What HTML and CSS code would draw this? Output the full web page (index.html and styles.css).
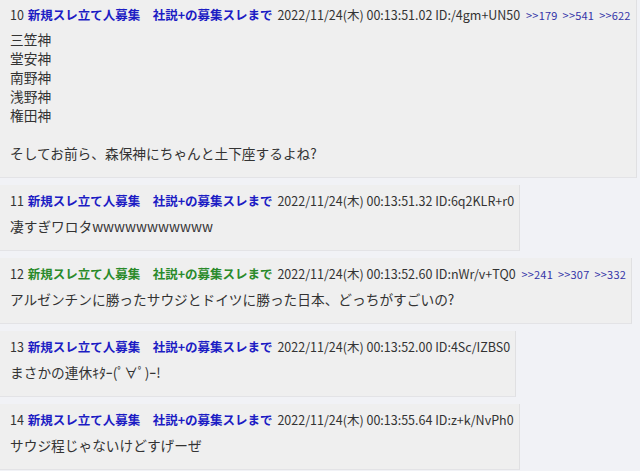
FILE: index.html
```html
<!DOCTYPE html>
<html lang="ja">
<head>
    <meta charset="UTF-8">
    <meta name="viewport" content="width=device-width, initial-scale=1.0">
    <title>スレッド</title>
    <link rel="stylesheet" href="styles.css">
</head>
<body>
    <div class="thread">
        <div class="post post-first">
            <div class="meta">
                <span class="num">10</span>
                <span class="name">新規スレ立て人募集　社説+の募集スレまで</span>
                <span class="date">2022/11/24(木) 00:13:51.02 ID:/4gm+UN50</span>
                <span class="refs"><a>&gt;&gt;179</a><a>&gt;&gt;541</a><a>&gt;&gt;622</a></span>
            </div>
            <div class="body">三笠神<br>堂安神<br>南野神<br>浅野神<br>権田神<br><br>そしてお前ら、森保神にちゃんと土下座するよね?</div>
        </div>
        <div class="post">
            <div class="meta">
                <span class="num">11</span>
                <span class="name">新規スレ立て人募集　社説+の募集スレまで</span>
                <span class="date">2022/11/24(木) 00:13:51.32 ID:6q2KLR+r0</span>
            </div>
            <div class="body">凄すぎワロタwwwwwwwwwww</div>
        </div>
        <div class="post">
            <div class="meta">
                <span class="num">12</span>
                <span class="name green">新規スレ立て人募集　社説+の募集スレまで</span>
                <span class="date">2022/11/24(木) 00:13:52.60 ID:nWr/v+TQ0</span>
                <span class="refs"><a>&gt;&gt;241</a><a>&gt;&gt;307</a><a>&gt;&gt;332</a></span>
            </div>
            <div class="body">アルゼンチンに勝ったサウジとドイツに勝った日本、どっちがすごいの?</div>
        </div>
        <div class="post">
            <div class="meta">
                <span class="num">13</span>
                <span class="name">新規スレ立て人募集　社説+の募集スレまで</span>
                <span class="date">2022/11/24(木) 00:13:52.00 ID:4Sc/IZBS0</span>
            </div>
            <div class="body">まさかの連休ｷﾀｰ(ﾟ∀ﾟ)ｰ!</div>
        </div>
        <div class="post">
            <div class="meta">
                <span class="num">14</span>
                <span class="name">新規スレ立て人募集　社説+の募集スレまで</span>
                <span class="date">2022/11/24(木) 00:13:55.64 ID:z+k/NvPh0</span>
            </div>
            <div class="body">サウジ程じゃないけどすげーぜ</div>
        </div>
    </div>
</body>
</html>
```

FILE: styles.css
```css
body {
    margin: 0;
    padding: 0;
    background-color: #f1f2f6;
    font-family: "Noto Sans CJK JP", "Noto Sans", sans-serif;
    color: #333333;
}
.thread {
    display: flex;
    flex-direction: column;
    align-items: flex-start;
    gap: 7px;
    margin-top: -1px;
}
.post {
    width: fit-content;
    background-color: #efefef;
    border-right: 1px solid #e0e0e2;
    border-bottom: 1px solid #e3e3e6;
    padding: 7px 5px 14px 10px;
}
.meta {
    font-size: 12.5px;
    line-height: 18px;
    white-space: nowrap;
    color: #333333;
}
.name {
    color: #1c1cc4;
    font-weight: bold;
    margin: 0 2px 0 1px;
}
.name.green {
    color: #2a8a2a;
}
.refs {
    font-size: 11px;
    margin-left: 3px;
}
.refs a {
    color: #3434a8;
    margin-right: 5px;
    letter-spacing: 0.2px;
}
.refs a:last-child {
    margin-right: 0;
}
.body {
    margin-top: 7px;
    font-size: 13.7px;
    line-height: 19px;
    color: #333333;
}
.post-first .body {
    margin-top: 6px;
}
```
